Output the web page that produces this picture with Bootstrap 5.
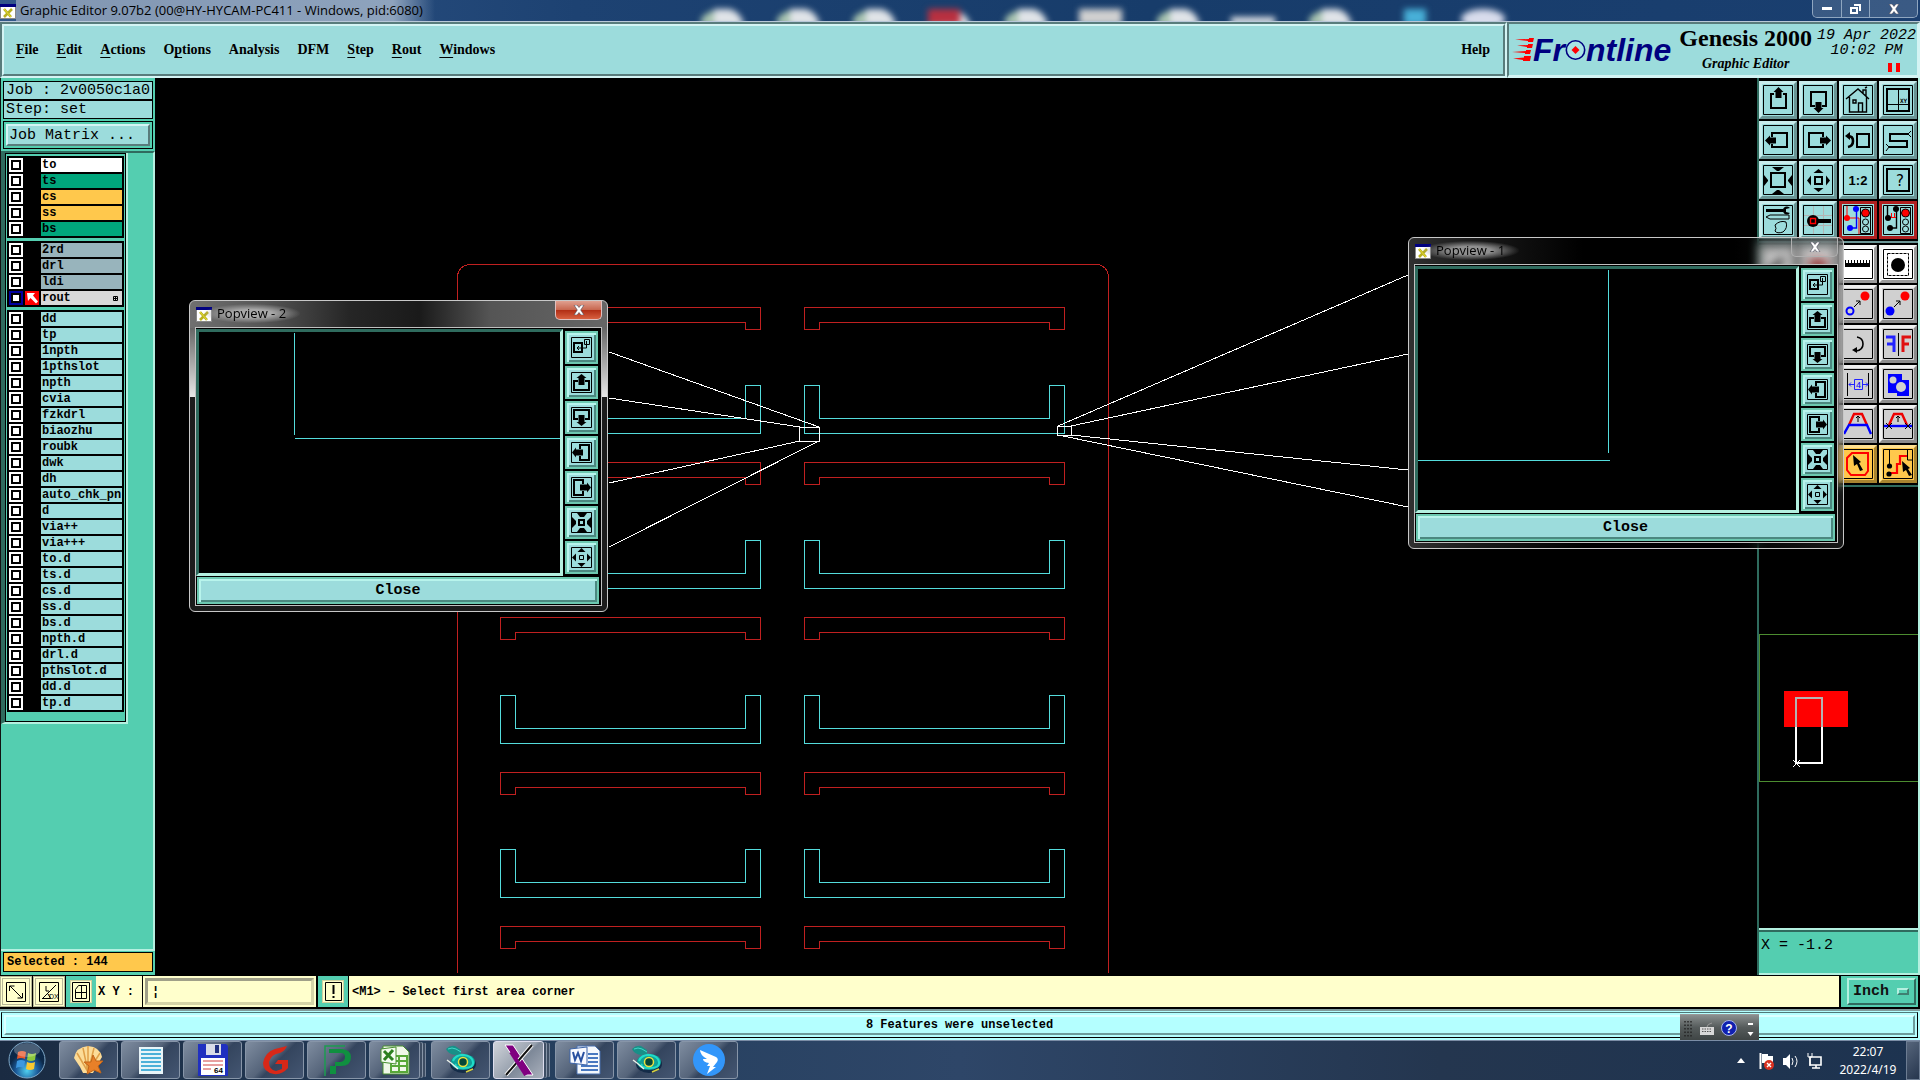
<!DOCTYPE html>
<html lang="en">
<head>
<meta charset="utf-8">
<meta name="viewport" content="width=device-width, initial-scale=1">
<title>Graphic Editor 9.07b2</title>
<link href="https://cdn.jsdelivr.net/npm/bootstrap@5.3.0/dist/css/bootstrap.min.css" rel="stylesheet">
<script src="https://cdn.jsdelivr.net/npm/bootstrap@5.3.0/dist/js/bootstrap.bundle.min.js"></script>
<style>
:root{--aqua:#9cdcdc;--aqua-hi:#d4f4f4;--aqua-lo:#587c7c;--green:#54ceb0;--green-hi:#b4f0e0;--green-lo:#2f6b5e;--cream:#ffffcc;--amber:#ffc84c}
body{background:#000;color:#000;overflow:hidden;line-height:1}
button{border-radius:0;color:#000}
svg{display:block;flex:none}
.ui-sans{font-family:"Open Sans","Noto Sans",sans-serif;font-size:13px}
.ui-serif{font-family:"Liberation Serif",serif;font-weight:bold;font-size:14px}
.mono-lg{font-family:"Liberation Mono",monospace;font-size:15px}
.mono-sm{font-family:"Liberation Mono",monospace;font-size:12px;font-weight:bold;white-space:nowrap}
/* main window title */
.app-title{height:22px;background:linear-gradient(90deg,#33588a,#1d4272 30%,#173c6a 60%,#1a3f70);border-bottom:1px solid #b9c8d8;overflow:hidden}
.app-title .glow-text{background:linear-gradient(90deg,#8095b1,#8ea3bd 90%,#8ea3bd00);padding-right:12px;line-height:21px}
.win-ctl{height:18px;border:1px solid #8fa6c0;border-top:0;border-radius:0 0 5px 5px;overflow:hidden;margin-right:2px}
.win-ctl button{border:0;border-right:1px solid #8fa6c0;background:#ffffff24;padding:0;display:flex;align-items:center;justify-content:center}
.ghosts{left:690px;top:0;overflow:hidden}
/* menu and brand */
.head-box{height:56px;background:var(--aqua);border:2px solid var(--aqua-lo);border-width:2px 0 0 2px}
.menu-panel{border:2px solid var(--aqua-hi);border-right-color:var(--aqua-lo);border-bottom-color:var(--aqua-lo);padding:0 13px 0 12px;gap:18px}
.menu-outer{border-right:2px solid var(--aqua-hi);border-bottom:2px solid var(--aqua-hi)}
.menu-link{color:#000;text-decoration:none}
.menu-link u{text-underline-offset:3px;text-decoration-thickness:1px}
.brand{width:413px;border-right:3px solid var(--aqua-hi);border-bottom:3px solid var(--aqua-hi)}
.logo-word{font:italic bold 32px "Liberation Sans",sans-serif;color:#000080;line-height:30px;margin-left:4px}
.brand-name{font-family:"Liberation Serif",serif;font-weight:bold;font-size:24px;line-height:28px}
.clock-txt{font-style:italic;line-height:15px}
.clock-col{padding:4px 0 0 4px}
.pause{margin:5px 17px 0 0}
.pause i{width:4px;height:9px;background:#f00}
/* left column */
.side{width:155px;background:var(--green);border-left:1px solid #111}
.info-box{height:19px;border:1px solid #000;background:var(--aqua);padding-left:2px;line-height:18px;white-space:nowrap}
.job-wrap{border:1px solid #000;height:28px;padding:2px;margin-top:2px}
.job-btn{border:2px solid var(--aqua-hi);border-right-color:var(--aqua-lo);border-bottom-color:var(--aqua-lo);background:var(--aqua);text-align:left;padding:0 0 0 1px}
.tray{border-top:2px solid var(--green-lo);border-right:2px solid var(--green-hi);border-bottom:2px solid var(--green-hi)}
.layer-well{width:127px;border-left:4px solid var(--green-lo);border-right:2px solid var(--green-hi);border-bottom:2px solid var(--green-hi)}
.layer-list{border:1px solid #000;padding:2px 1px 9px;display:flex;flex-direction:column;gap:3px}
.layer-set{background:#000;padding:2px;display:flex;flex-direction:column;gap:2px}
.layer-row{height:14px;display:flex;gap:2px}
.layer-row input{appearance:none;width:14px;height:14px;margin:0;background:#fff;border:2px solid #fff;box-shadow:inset 0 0 0 2px #000;flex:none}
.layer-row .act{width:14px;flex:none}
.layer-row .nm{flex:1;background:var(--aqua);padding-left:1px;line-height:14px;overflow:hidden}
.c-white .nm{background:#fff}.c-green .nm{background:#00a67c}.c-amber .nm{background:var(--amber)}.c-slate .nm{background:#98b4bc}
.c-active .nm{background:#d8d8d8}.c-active .act{background:#f00}.layer-row.c-active input{border-color:#0000a0}
.sel-box{background:var(--amber);border:1px solid #000;height:20px;line-height:18px;padding-left:3px}
/* right column */
.tools{width:163px;border-left:2px solid var(--green-lo);border-right:2px solid var(--green-hi)}
.tool-grid{display:grid;grid-template-columns:repeat(4,38px);gap:2px;padding:3px 0 2px}
.tool-grid.second{border-top:2px solid #6a9494;padding-top:2px}
.tb{width:38px;height:38px;padding:0;display:flex;align-items:center;justify-content:center;background:var(--aqua);border:3px solid;border-color:#c8ecec #6a9494 #6a9494 #c8ecec}
.tb.hot{border-color:#b02020;background:var(--aqua)}
.tb.wht{background:#fff;border-color:#f4f4f4 #9a9a9a #9a9a9a #f4f4f4}
.tb.gry{background:#d0d0d0;border-color:#f0f0f0 #8c8c8c #8c8c8c #f0f0f0}
.tb.amb{background:var(--amber);border-color:#ffe090 #a88430 #a88430 #ffe090}
.overview{border-top:2px solid var(--green-lo)}
.coord{height:47px;background:var(--green);border-top:2px solid var(--green-hi);border-bottom:2px solid var(--green-hi);box-shadow:inset 0 2px 0 var(--green-lo);padding:8px 2px}
/* command line */
.cmd{height:34px;background:#000;padding:1px 0 2px}
.cmd-fill{background:var(--cream)}
.cmd-msg{margin:0 2px 0 1px;padding-left:3px}
.xy-lbl{width:46px;padding-left:2px}
.cmd-btn{width:32px;padding:0;background:var(--cream);border:3px double #b8b898;display:flex;align-items:center;justify-content:center}
.cmd-btn.grn{width:30px;border:4px solid var(--green);box-shadow:inset 0 0 0 1px #d0d0a0}
.xy-in{width:169px;border:3px solid;border-color:#a0a088 #d4d4a8 #d4d4a8 #a0a088;outline:2px solid var(--cream);margin:2px 4px 2px 3px;background:var(--cream);border-radius:0;padding:0 4px}
.unit{background:var(--green);width:77px;padding:2px 2px 2px 6px;margin-right:2px}
.unit select{appearance:none;width:100%;border:2px solid;border-color:var(--green-hi) var(--green-lo) var(--green-lo) var(--green-hi);background:var(--green);font-weight:bold;padding:0 4px;border-radius:0;color:#111}
.unit i{right:9px;top:12px;width:12px;height:7px;border:2px solid;border-color:#b4f0e0 #3f8072 #3f8072 #b4f0e0;pointer-events:none}
.status{height:31px;background:#b4ffff;border-top:2px solid #809c9c;padding:1px 2px 2px 1px}
.status-in{border:1px solid #000;border-top-color:#507878}
.status-in div{border:2px solid #dcffff;border-right-color:#6c9c9c;border-bottom-color:#6c9c9c;margin:2px}
/* popview windows */
.pop{border:1px solid #c8c8c8;border-radius:6px;backdrop-filter:blur(5px);padding:0 5px 5px;height:312px}
.pop-1{left:1408px;top:237px;width:436px;background:linear-gradient(90deg,#5a5a5a88,#30303088 15%,#00000055 40%,#00000040 75%,#60606040)}
.pop-2{left:189px;top:300px;width:419px;background:linear-gradient(90deg,#707070,#555 18%,#262626 38%,#1a1a1a 55%,#555 72%,#666) 0 0/100% 27px no-repeat,#1c1c1c}
.pop-2::before,.pop-2::after{content:"";position:absolute;top:27px;width:5px;height:69px;background:linear-gradient(#666,#e8e8e8)}
.pop-2::before{left:0}.pop-2::after{right:0}
.pop-title{height:26px;padding-left:1px}
.pop-title svg.wi{margin-top:6px}
.pop-title .glow-text{background:radial-gradient(ellipse at center,#a8a8a8 30%,#a8a8a800 72%);padding:3px 14px;margin:3px 0 0 -9px}
.pop-1 .glow-text{background:radial-gradient(ellipse at center,#909090 30%,#90909000 72%)}
.pop-x{width:47px;height:19px;border:1px solid #e0c0c0;border-top:0;border-radius:0 0 5px 5px;background:linear-gradient(#e0a090,#c86850 48%,#b02c14 50%,#d86040);padding:0;display:flex;align-items:center;justify-content:center}
.pop-1 .pop-x{background:#ffffff18;border-color:#b0b0b0}
.pop-body{border:1px solid #c0c0c0;background:#000;padding:1px 1px 1px 0}
.pop-view{border:3px solid;border-color:var(--green-lo) var(--green-hi) var(--green-hi) var(--green-lo);background:#000}
.pop-tools{display:flex;flex-direction:column;gap:2px;padding:2px 2px 2px 2px}
.pb{width:33px;height:33px;padding:0;background:var(--aqua);border:2px solid #6cc8b0;display:flex;align-items:center;justify-content:center;box-shadow:inset 2px 2px 0 #b8f4ec,inset -2px -2px 0 #4c8880}
.pop-close{height:27px;margin:1px 1px 0;border:2px solid #6cc8b0;background:var(--aqua);box-shadow:inset 2px 2px 0 #b8f4ec,inset -2px -2px 0 #4c8880;padding:0;font-weight:bold}
/* taskbar */
.task{height:40px;background:linear-gradient(90deg,#1a2b42,#26405f 30%,#2e4668 50%,#24364f 75%,#1d3350);border-top:1px solid #7b8da6;padding-left:3px}
.tk{width:59px;height:38px;margin-right:3px;padding:0;display:flex;align-items:center;justify-content:center;border:1px solid #8795a8;border-radius:3px;background:linear-gradient(135deg,#7f8da0,#56657b 45%,#34455e 55%,#445672)}
.tk.stack{width:51px;margin-right:11px;box-shadow:3px 0 0 -1px #3d4d63,4px 0 0 -1px #8795a8,7px 0 0 -2px #3d4d63,8px 0 0 -2px #77869b}
.tk.on{background:linear-gradient(135deg,#d0d4da,#9aa3b0 50%,#7d8898 55%,#a9b0bc);border-color:#dde}
.orb{width:48px;padding:0;border:0;background:none;display:flex;justify-content:center;margin-right:8px}
.clock2{font-family:"Noto Sans",sans-serif;font-size:12px;line-height:18px;color:#fff;width:74px;text-align:center;margin:0 1px 0 5px}
.show-desk{width:14px;border:1px solid #6c7c92;background:linear-gradient(135deg,#56657b,#26364e)}
.ime{left:1680px;top:1014px;width:79px;height:26px;background:linear-gradient(#8a8f8f,#555b5b 50%,#3f4545);border-top:1px solid #999}
</style>
</head>
<body class="d-flex flex-column vh-100 position-relative">

<svg width="0" height="0" class="position-absolute" aria-hidden="true">
<defs>
<symbol id="winico" viewBox="0 0 16 15"><path fill="#fff" stroke="#888" d="M.5.5h15v14H.5z"/><path fill="#000080" d="M0 0h16v3H0z"/><path stroke="#b8b020" stroke-width="2.6" d="M4 5l7 8M12 5l-8 8"/><path stroke="#e8e030" d="M4 5l7 8"/></symbol>
<symbol id="cross" viewBox="0 0 12 10"><path d="M1 0h3l2 2.500 2-2.500h3L7.700 5 11 10H8L6 7.500 4 10H1l3.300-5z" fill="#fff" stroke="#445" stroke-width=".6"/></symbol>
<symbol id="fr" viewBox="0 0 30 30"><path d="M.5.5h29v29H.5z" fill="none" stroke="#000"/></symbol>
<symbol id="up" viewBox="0 0 30 30"><path d="M11 9H8v14h15V9h-3" fill="none" stroke="#000" stroke-width="2"/><path d="M15.500 2l5 5h-2v6h-6V7h-2z"/></symbol>
<symbol id="down" viewBox="0 0 30 30"><path d="M12 21H8V7h15v14h-4" fill="none" stroke="#000" stroke-width="2"/><path d="M15.500 28l5-5h-2v-6h-6v6h-2z"/></symbol>
<symbol id="left" viewBox="0 0 30 30"><path d="M9 12V8h15v14H9v-3" fill="none" stroke="#000" stroke-width="2"/><path d="M2 15.500l5-5v2h6v6H7v2z"/></symbol>
<symbol id="right" viewBox="0 0 30 30"><path d="M20 12V8H6v14h14v-3" fill="none" stroke="#000" stroke-width="2"/><path d="M28 15.500l-5-5v2h-6v6h6v2z"/></symbol>
<symbol id="zin" viewBox="0 0 30 30"><path d="M8 8h14v14H8z" fill="none" stroke="#000" stroke-width="2"/><path d="M9 2h12l-5 4h-2zM9 29h12l-5-4h-2zM1 10v11l4-5v-1zM29 10v11l-4-5v-1z"/></symbol>
<symbol id="zout" viewBox="0 0 30 30"><path d="M12 12h7v7h-7z" fill="none" stroke="#000" stroke-width="2"/><path d="M15.500 4l5 4h-10zM15.500 27l5-4h-10zM4 15.500l4-5v10zM27 15.500l-4-5v10z"/></symbol>
<symbol id="pf" viewBox="0 0 21 21"><path d="M.5.5h20v20H.5z" fill="none" stroke="#000"/></symbol>
<symbol id="p1" viewBox="0 0 21 21"><path d="M3 6h8v9H3z" fill="none" stroke="#000" stroke-width="2"/><path d="M13.500 2.500h5v5h-5zM15.500 4v7H6M8 9l-2 2 2 2" fill="none" stroke="#000"/></symbol>
<symbol id="p2" viewBox="0 0 21 21"><path d="M7 9H3v9h15V9h-4" fill="none" stroke="#000" stroke-width="2"/><path d="M10.500 2l5 4h-2v7h-6V6h-2z"/></symbol>
<symbol id="p3" viewBox="0 0 21 21"><path d="M7 12H3V3h15v9h-4" fill="none" stroke="#000" stroke-width="2"/><path d="M10.500 19l5-4h-2V8h-6v7h-2z"/></symbol>
<symbol id="p4" viewBox="0 0 21 21"><path d="M9 7V3h9v15H9v-4" fill="none" stroke="#000" stroke-width="2"/><path d="M1 10.500l4-5v2h7v6H5v2z"/></symbol>
<symbol id="p5" viewBox="0 0 21 21"><path d="M12 7V3H3v15h9v-4" fill="none" stroke="#000" stroke-width="2"/><path d="M20 10.500l-4-5v2H9v6h7v2z"/></symbol>
<symbol id="p6" viewBox="0 0 21 21"><path d="M8 8h5v5H8z" fill="none" stroke="#000" stroke-width="2"/><path d="M6 1h10l-3 4H9zM6 20h10l-3-4H9zM1 5v11l4-4V9zM20 5v11l-4-4V9z"/></symbol>
<symbol id="p7" viewBox="0 0 21 21"><path d="M8.500 8.500h4v4h-4z" fill="none" stroke="#000"/><path d="M10.500 1l4 4h-8zM10.500 20l4-4h-8zM1 10.500l4-4v8zM20 10.500l-4-4v8z"/></symbol>
<symbol id="lights" viewBox="0 0 30 30"><path d="M17.500 2.500h10v26h-10z" fill="#9cdcdc" stroke="#000"/><circle cx="22.500" cy="8" r="4" fill="#f00" stroke="#000"/><circle cx="22.500" cy="17" r="3" fill="none" stroke="#000"/><circle cx="22.500" cy="24" r="3" fill="none" stroke="#000"/></symbol>
<symbol id="cad" viewBox="0 0 32 32"><ellipse cx="18" cy="20" rx="13" ry="9" fill="#142c48"/><ellipse cx="18" cy="18" rx="12" ry="8" fill="#10a098"/><path d="M8 17q3-7 11-6t9 7-9 6-8-4" fill="none" stroke="#20dcc8" stroke-width="2"/><path d="M1 5q4-4 9-3l6 4v4l-6 1Q3 10 1 5z" fill="#189088"/><path d="M3 5q4-2 8 0l5 3" fill="none" stroke="#40d8c8"/><circle cx="18" cy="18" r="4.500" fill="#064838" stroke="#e8e040" stroke-width="1.500"/><path d="M2 16l4 3 7 6" stroke="#e8f0e8" stroke-width="1.500" fill="none"/><path d="M21 28l7-3" stroke="#d8d040" stroke-width="1.500"/></symbol>
</defs></svg>

<header class="app-title d-flex align-items-start flex-shrink-0 position-relative ui-sans">
  <svg width="16" height="15" class="mt-1"><use href="#winico"/></svg>
  <span class="glow-text ps-1 text-nowrap">Graphic Editor 9.07b2 (00@HY-HYCAM-PC411 - Windows, pid:6080)</span>
  <svg class="ghosts position-absolute" width="830" height="21" aria-hidden="true"><defs><g id="ghost"><path fill="#a8c4b0" d="M-21 24V17q5-8 17-9v16z"/><path fill="#e0e4e8" d="M-8 24V7H8q12 4 14 17z"/></g></defs><g filter="blur(3px)"><use href="#ghost" x="32" y="2"/><use href="#ghost" x="108" y="2"/><use href="#ghost" x="184" y="2"/><use href="#ghost" x="259" y="4"/><path d="M238 9h32v16h-32z" fill="#b83040"/><use href="#ghost" x="336" y="2"/><path d="M389 9h43v16h-43z" fill="#d0d0d0"/><use href="#ghost" x="488" y="2"/><path d="M541 17h44v8h-44z" fill="#e0e4e8"/><use href="#ghost" x="640" y="2"/><path d="M714 9h22v16h-22z" fill="#48b0d8"/><ellipse cx="793" cy="19" rx="22" ry="10" fill="#d8dcec"/></g></svg>
  <div class="win-ctl d-flex ms-auto position-relative">
    <button type="button" aria-label="Minimize" style="width:29px"><svg width="10" height="4"><path fill="#fff" d="M0 0h10v3H0z"/></svg></button>
    <button type="button" aria-label="Restore" style="width:28px"><svg width="11" height="10"><path fill="none" stroke="#fff" stroke-width="2" d="M1 4h6v5H1zM4 1h6v6"/></svg></button>
    <button type="button" aria-label="Close" class="border-0" style="width:47px"><svg width="12" height="10"><use href="#cross"/></svg></button>
  </div>
</header>

<div class="d-flex flex-shrink-0">
  <div class="head-box menu-outer d-flex flex-grow-1 p-0">
    <nav class="menu-panel flex-grow-1 d-flex align-items-center ui-serif">
      <a class="menu-link" href="#"><u>F</u>ile</a><a class="menu-link" href="#"><u>E</u>dit</a><a class="menu-link" href="#"><u>A</u>ctions</a><a class="menu-link" href="#">O<u>p</u>tions</a><a class="menu-link" href="#">Analysis</a><a class="menu-link" href="#">DFM</a><a class="menu-link" href="#"><u>S</u>tep</a><a class="menu-link" href="#"><u>R</u>out</a><a class="menu-link" href="#"><u>W</u>indows</a>
      <a class="menu-link ms-auto" href="#">Help</a>
    </nav>
  </div>
  <div class="head-box brand d-flex">
    <div class="d-flex align-items-center logo-word">
      <svg width="20" height="24" overflow="visible"><path fill="#f00" d="M2 1.500l14-.5V0h5l-1 4h-5V3zM4 7.500l11-.5V6h5l-1 4h-5V9zM-1 14l14-1v-1h5l-1 4h-5v-1zM0 20.500l11-1V18h7l-1 5h-7v-1z"/></svg>
      <span>Fr</span><svg width="21" height="21" viewBox="0 0 21 21" aria-label="o"><circle cx="10.500" cy="11" r="9.200" fill="#a8e4e4" stroke="#000080" stroke-width="1.600"/><path fill="#f00" d="M10.500 7l4 4-4 4-4-4z"/></svg><span>ntline</span>
    </div>
    <div class="d-flex flex-column align-items-center ms-1 ps-1"><div class="brand-name text-nowrap">Genesis 2000</div><div class="ui-serif fst-italic" style="line-height:24px">Graphic Editor</div></div>
    <div class="clock-col d-flex flex-column align-items-center mono-lg flex-grow-1"><div class="clock-txt text-nowrap">19 Apr 2022</div><div class="clock-txt">10:02 PM</div><div class="pause d-flex gap-1 align-self-end"><i></i><i></i></div></div>
  </div>
</div>

<main class="d-flex flex-grow-1" style="min-height:0">
  <aside class="side d-flex flex-column flex-shrink-0">
    <div class="mono-lg" style="padding:3px 2px 2px">
      <div class="info-box">Job : 2v0050c1a0</div>
      <div class="info-box">Step: set</div>
      <div class="job-wrap d-flex"><button class="job-btn flex-grow-1" type="button">Job Matrix ...</button></div>
    </div>
    <div class="tray flex-grow-1 mono-sm">
      <div class="layer-well"><div class="layer-list">
        <div class="layer-set">
          <label class="layer-row c-white"><input type="checkbox"><span class="act"></span><span class="nm">to</span></label>
          <label class="layer-row c-green"><input type="checkbox"><span class="act"></span><span class="nm">ts</span></label>
          <label class="layer-row c-amber"><input type="checkbox"><span class="act"></span><span class="nm">cs</span></label>
          <label class="layer-row c-amber"><input type="checkbox"><span class="act"></span><span class="nm">ss</span></label>
          <label class="layer-row c-green"><input type="checkbox"><span class="act"></span><span class="nm">bs</span></label>
        </div>
        <div class="layer-set">
          <label class="layer-row c-slate"><input type="checkbox"><span class="act"></span><span class="nm">2rd</span></label>
          <label class="layer-row c-slate"><input type="checkbox"><span class="act"></span><span class="nm">drl</span></label>
          <label class="layer-row c-slate"><input type="checkbox"><span class="act"></span><span class="nm">ldi</span></label>
          <label class="layer-row c-active"><input type="checkbox" checked><span class="act"><svg width="14" height="14"><path fill="#fff" d="M2 2h8L8 4.500l5 6-2 2-5.500-5.500L3 10z"/></svg></span><span class="nm d-flex justify-content-between align-items-center pe-1">rout<svg width="5" height="5"><path d="M.5.5h4v4h-4zM2.500 0v5M0 2.500h5" fill="none" stroke="#000"/></svg></span></label>
        </div>
        <div class="layer-set">
          <label class="layer-row"><input type="checkbox"><span class="act"></span><span class="nm">dd</span></label>
          <label class="layer-row"><input type="checkbox"><span class="act"></span><span class="nm">tp</span></label>
          <label class="layer-row"><input type="checkbox"><span class="act"></span><span class="nm">1npth</span></label>
          <label class="layer-row"><input type="checkbox"><span class="act"></span><span class="nm">1pthslot</span></label>
          <label class="layer-row"><input type="checkbox"><span class="act"></span><span class="nm">npth</span></label>
          <label class="layer-row"><input type="checkbox"><span class="act"></span><span class="nm">cvia</span></label>
          <label class="layer-row"><input type="checkbox"><span class="act"></span><span class="nm">fzkdrl</span></label>
          <label class="layer-row"><input type="checkbox"><span class="act"></span><span class="nm">biaozhu</span></label>
          <label class="layer-row"><input type="checkbox"><span class="act"></span><span class="nm">roubk</span></label>
          <label class="layer-row"><input type="checkbox"><span class="act"></span><span class="nm">dwk</span></label>
          <label class="layer-row"><input type="checkbox"><span class="act"></span><span class="nm">dh</span></label>
          <label class="layer-row"><input type="checkbox"><span class="act"></span><span class="nm">auto_chk_pnl</span></label>
          <label class="layer-row"><input type="checkbox"><span class="act"></span><span class="nm">d</span></label>
          <label class="layer-row"><input type="checkbox"><span class="act"></span><span class="nm">via++</span></label>
          <label class="layer-row"><input type="checkbox"><span class="act"></span><span class="nm">via+++</span></label>
          <label class="layer-row"><input type="checkbox"><span class="act"></span><span class="nm">to.d</span></label>
          <label class="layer-row"><input type="checkbox"><span class="act"></span><span class="nm">ts.d</span></label>
          <label class="layer-row"><input type="checkbox"><span class="act"></span><span class="nm">cs.d</span></label>
          <label class="layer-row"><input type="checkbox"><span class="act"></span><span class="nm">ss.d</span></label>
          <label class="layer-row"><input type="checkbox"><span class="act"></span><span class="nm">bs.d</span></label>
          <label class="layer-row"><input type="checkbox"><span class="act"></span><span class="nm">npth.d</span></label>
          <label class="layer-row"><input type="checkbox"><span class="act"></span><span class="nm">drl.d</span></label>
          <label class="layer-row"><input type="checkbox"><span class="act"></span><span class="nm">pthslot.d</span></label>
          <label class="layer-row"><input type="checkbox"><span class="act"></span><span class="nm">dd.d</span></label>
          <label class="layer-row"><input type="checkbox"><span class="act"></span><span class="nm">tp.d</span></label>
        </div>
      </div></div>
    </div>
    <div style="padding:1px 2px 3px"><div class="sel-box mono-sm">Selected : 144</div></div>
  </aside>

  <section class="flex-grow-1 overflow-hidden" aria-label="Board canvas" style="min-width:0">
    <svg width="100%" height="100%" shape-rendering="crispEdges" fill="none">
      <defs>
        <path id="rail" d="M.5.5h260v22h-15v-7h-230v7H.5z"/>
        <path id="tub" d="M.5.5h15v33h230V.5h15v48H.5z"/>
      </defs>
      <g transform="translate(-155 -78)">
        <path stroke="#c02020" d="M457.500 973V275q2-9 11-10.500h630q8 2 10 10.500v698"/>
        <g stroke="#c02020">
          <use href="#rail" x="500" y="307"/><use href="#rail" x="804" y="307"/>
          <use href="#rail" x="500" y="462"/><use href="#rail" x="804" y="462"/>
          <use href="#rail" x="500" y="617"/><use href="#rail" x="804" y="617"/>
          <use href="#rail" x="500" y="772"/><use href="#rail" x="804" y="772"/>
          <use href="#rail" x="500" y="926"/><use href="#rail" x="804" y="926"/>
        </g>
        <g stroke="#54dcdc">
          <use href="#tub" x="500" y="385"/><use href="#tub" x="804" y="385"/>
          <use href="#tub" x="500" y="540"/><use href="#tub" x="804" y="540"/>
          <use href="#tub" x="500" y="695"/><use href="#tub" x="804" y="695"/>
          <use href="#tub" x="500" y="849"/><use href="#tub" x="804" y="849"/>
        </g>
        <path stroke="#fff" d="M799.500 427.500h20v14h-20zM1057.500 426.500h14v9h-14zM609 352l210 75M609 398l191 29M609 483l191-42M609 547l210-106M1058 426l350-151M1071 426l337-72M1071 435l337 35M1058 435l350 72"/>
      </g>
    </svg>
  </section>

  <aside class="tools d-flex flex-column flex-shrink-0">
    <div class="tool-grid">
      <button type="button" class="tb" aria-label="Pan up"><svg width="30" height="30"><use href="#fr"/><use href="#up"/></svg></button>
      <button type="button" class="tb" aria-label="Pan down"><svg width="30" height="30"><use href="#fr"/><use href="#down"/></svg></button>
      <button type="button" class="tb" aria-label="Home view"><svg width="30" height="30"><use href="#fr"/><path d="M3 14L15 4l11 10M6.500 12v15h17V12M20 8V5h3v6M10 15h3v3h-3zM15.500 27v-9h4v9M22 3l2-1" fill="none" stroke="#000" stroke-width="1.400"/></svg></button>
      <button type="button" class="tb" aria-label="XY coordinates"><svg width="30" height="30"><use href="#fr"/><path d="M4 4h22v22H4z" fill="none" stroke="#000" stroke-width="2"/><path d="M15.500 4v22M4 19.500h22" stroke="#000"/><text x="17" y="18" font-size="6" font-family="DejaVu Sans Mono" font-weight="bold">XY</text></svg></button>
      <button type="button" class="tb" aria-label="Pan left"><svg width="30" height="30"><use href="#fr"/><use href="#left"/></svg></button>
      <button type="button" class="tb" aria-label="Pan right"><svg width="30" height="30"><use href="#fr"/><use href="#right"/></svg></button>
      <button type="button" class="tb" aria-label="Previous view"><svg width="30" height="30"><use href="#fr"/><path d="M14 9h12v13H14z" fill="none" stroke="#000" stroke-width="2"/><path d="M5 11q5 0 5 5t-5 6" fill="none" stroke="#000" stroke-width="2.600"/><path d="M2 11l5-4v8z"/></svg></button>
      <button type="button" class="tb" aria-label="Serpentine"><svg width="30" height="30"><use href="#fr"/><path d="M25 9H7v7h17v6H6" fill="none" stroke="#000" stroke-width="2"/><path d="M28 6l-3 3 3 3M3 19l3 3-3 4" fill="none" stroke="#000"/></svg></button>
      <button type="button" class="tb" aria-label="Zoom in"><svg width="30" height="30"><use href="#fr"/><use href="#zin"/></svg></button>
      <button type="button" class="tb" aria-label="Zoom out"><svg width="30" height="30"><use href="#fr"/><use href="#zout"/></svg></button>
      <button type="button" class="tb" aria-label="Scale 1:2"><svg width="30" height="30"><use href="#fr"/><text x="15" y="20" text-anchor="middle" font-size="13" font-family="Liberation Sans" font-weight="bold">1:2</text></svg></button>
      <button type="button" class="tb" aria-label="Query"><svg width="30" height="30"><use href="#fr"/><path d="M4 4h22v22H4z" fill="none" stroke="#000" stroke-width="2"/><text x="17" y="21" text-anchor="middle" font-size="15" font-family="DejaVu Sans">?</text></svg></button>
      <button type="button" class="tb" aria-label="Setup"><svg width="30" height="30"><use href="#fr"/><path d="M3 5.500h17" stroke="#000" stroke-width="3"/><path d="M27 3a4 4 0 1 0 0 5l-4-1V4z"/><path d="M3 12l4-2h19v4H7zM12 20q5-5 11-3 2 6-3 10-6 2-8-1 2-2 0-6z" fill="none" stroke="#000"/></svg></button>
      <button type="button" class="tb" aria-label="Snap"><svg width="30" height="30"><path d="M10.500 0v30M20.500 0v30M0 10.500h30M0 20.500h30" stroke="#b4b4b4"/><use href="#fr"/><circle cx="10" cy="16" r="6"/><path d="M14 16h14" stroke="#000" stroke-width="4"/><path d="M7.500 13.500h5v5h-5z" fill="none" stroke="#f00" stroke-width="1.400"/></svg></button>
      <button type="button" class="tb hot" aria-label="Net check"><svg width="30" height="30"><use href="#fr"/><path d="M4 1v12h12v16" fill="none" stroke="#f00"/><path d="M13.500 4v19H7" fill="none" stroke="#00f" stroke-width="1.400"/><circle cx="4" cy="13" r="3" fill="#f00"/><circle cx="13" cy="4" r="3" fill="#00f"/><circle cx="7" cy="23" r="3" fill="#00f"/><use href="#lights"/></svg></button>
      <button type="button" class="tb hot" aria-label="Spacing check"><svg width="30" height="30"><use href="#fr"/><path d="M4.500 1v12M13.500 4v19H7" fill="none" stroke="#000" stroke-width="1.400"/><path d="M6 12.500h7M8.500 8v4M11.500 8v4" stroke="#f00"/><circle cx="5" cy="13" r="3"/><circle cx="13" cy="4" r="3"/><circle cx="7" cy="23" r="3"/><use href="#lights"/></svg></button>
    </div>
    <div class="tool-grid second">
      <button type="button" class="tb wht" aria-label="Select"><svg width="30" height="30"><use href="#fr"/><path d="M6 24L20 10" stroke="#000" stroke-width="5"/></svg></button>
      <button type="button" class="tb wht" aria-label="Delete"><svg width="30" height="30"><use href="#fr"/><path d="M6 10h18v10H6z" fill="#a02020"/></svg></button>
      <button type="button" class="tb wht" aria-label="Measure"><svg width="30" height="30"><use href="#fr"/><path d="M2 18V11h1v3h2v-3h1v3h2v-3h1v3h2v-3h1v3h2v-3h1v3h2v-3h1v3h2v-3h1v3h2v-3h1v3h2v-3h1v7z"/></svg></button>
      <button type="button" class="tb wht" aria-label="Feature"><svg width="30" height="30"><use href="#fr"/><path d="M4.500 4.500h21v22h-21z" fill="none" stroke="#000" stroke-dasharray="3 1"/><circle cx="15" cy="16" r="7"/></svg></button>
      <button type="button" class="tb gry" aria-label="Edit 1"></button><button type="button" class="tb gry" aria-label="Edit 2"></button>
      <button type="button" class="tb gry" aria-label="Copy"><svg width="30" height="30"><use href="#fr"/><circle cx="7" cy="22" r="3.500" fill="none" stroke="#00f" stroke-width="2"/><circle cx="22" cy="7" r="4.500" fill="#f00"/><path d="M11 18l6-6m-4 0h4v4" fill="none" stroke="#000"/></svg></button>
      <button type="button" class="tb gry" aria-label="Move"><svg width="30" height="30"><use href="#fr"/><circle cx="7" cy="22" r="4.500" fill="#00f"/><circle cx="22" cy="7" r="4.500" fill="#f00"/><path d="M11 18l6-6m-4 0h4v4" fill="none" stroke="#000"/></svg></button>
      <button type="button" class="tb gry" aria-label="Edit 3"></button><button type="button" class="tb gry" aria-label="Edit 4"></button>
      <button type="button" class="tb gry" aria-label="Rotate"><svg width="30" height="30"><use href="#fr"/><path d="M14 8q6 1 6 7t-7 7" fill="none" stroke="#000" stroke-width="1.600"/><path d="M9 21l5-3v6z"/></svg></button>
      <button type="button" class="tb gry" aria-label="Mirror"><svg width="30" height="30"><use href="#fr"/><path d="M3 8h8v15M4 15h7" fill="none" stroke="#22f" stroke-width="3"/><path d="M28 8h-8v15M26 15h-6" fill="none" stroke="#e01010" stroke-width="3"/><path d="M15.500 4v23" stroke="#000"/></svg></button>
      <button type="button" class="tb gry" aria-label="Edit 5"></button><button type="button" class="tb gry" aria-label="Edit 6"></button>
      <button type="button" class="tb gry" aria-label="Stretch"><svg width="30" height="30"><use href="#fr"/><path d="M4.500 4v23M25.500 4v23" stroke="#000"/><path d="M11.500 10.500h8v10h-8zM11 15.500H6m2-2l-2 2 2 2M20 15.500h5m-2-2l2 2-2 2" fill="none" stroke="#22f"/><text x="15.500" y="19" text-anchor="middle" font-size="9" font-family="Liberation Sans" fill="#00f">4</text></svg></button>
      <button type="button" class="tb gry" aria-label="Boolean"><svg width="30" height="30"><use href="#fr"/><path d="M5 5h14v6h7v16H14v-3H5z" fill="#00f"/><circle cx="10" cy="11" r="3.500" fill="#d0d0d0"/><circle cx="18" cy="18" r="5" fill="#d0d0d0"/></svg></button>
      <button type="button" class="tb gry" aria-label="Edit 7"></button><button type="button" class="tb gry" aria-label="Edit 8"></button>
      <button type="button" class="tb gry" aria-label="Reshape line"><svg width="30" height="30"><use href="#fr"/><path d="M6 16l5-11h8l5 11" fill="none" stroke="#e00" stroke-width="2.400"/><path d="M1 25l5-9h18l4 9" fill="none" stroke="#00f" stroke-width="2.400"/><path d="M15 13V7m-2 2l2-2 2 2" fill="none" stroke="#000"/></svg></button>
      <button type="button" class="tb gry" aria-label="Reshape break"><svg width="30" height="30"><use href="#fr"/><path d="M6 16l5-11h8l5 11" fill="none" stroke="#e00" stroke-width="2.400"/><path d="M1 17h28" fill="none" stroke="#00f" stroke-width="2.400"/><path d="M15 13V7m-2 2l2-2 2 2M3 14l6 6M9 14l-6 6M22 14l6 6M28 14l-6 6" fill="none" stroke="#000"/></svg></button>
      <button type="button" class="tb amb" aria-label="Select 1"></button><button type="button" class="tb amb" aria-label="Select 2"></button>
      <button type="button" class="tb amb" aria-label="Polygon select"><svg width="30" height="30"><use href="#fr"/><path d="M9 4h16v18l-3 4H8l-4-5V9z" fill="none" stroke="#f00" stroke-width="2"/><path d="M10 6l8 7-2 1 4 7-3 1-3-7-3 2z"/></svg></button>
      <button type="button" class="tb amb" aria-label="Net select"><svg width="30" height="30"><use href="#fr"/><path d="M7 24h7v-9h3V7h8" fill="none" stroke="#f00" stroke-width="2.200"/><path d="M6.500 1v16M24.500 1v10h5" stroke="#000" fill="none"/><circle cx="6.500" cy="17" r="2.600"/><circle cx="6" cy="25" r="2.600"/><path d="M19 12l8 7-2 1 4 6-3 1-3-6-3 2z"/></svg></button>
    </div>
    <div class="overview flex-grow-1">
      <svg width="159" height="100%" fill="none" shape-rendering="crispEdges">
        <g transform="translate(-1759 -487)"><path stroke="#4c8c30" d="M1920 634.500h-160.500v147H1920"/><path fill="#f00" d="M1784 691h64v36h-64z"/><path stroke="#fff" stroke-width="2" d="M1796 727v36h26v-36"/><path stroke="#b4b4b4" stroke-width="2" d="M1796 727v-29h26v29"/><path stroke="#fff" d="M1793 760l7 7M1800 760l-7 7"/></g>
      </svg>
    </div>
    <div class="coord mono-lg">X = -1.2</div>
  </aside>
</main>

<div class="cmd d-flex flex-shrink-0">
  <button type="button" class="cmd-btn" aria-label="Area corner"><svg width="20" height="20"><path d="M.5.5h19v19H.5zM3.500 9V4h5M4 4l12 12M16.500 11v5h-5" fill="none" stroke="#000"/></svg></button>
  <button type="button" class="cmd-btn" style="margin:0 1px" aria-label="Angle input"><svg width="20" height="20"><path d="M.5.5h19v19H.5zM3 17L17 3M3 16.500h8M7 4v5h3M9 12l3 5" fill="none" stroke="#000"/><text x="10" y="17" font-size="7" font-family="Liberation Sans">DX</text></svg></button>
  <button type="button" class="cmd-btn grn" aria-label="Grid"><svg width="18" height="20"><path d="M.5.5h17v19H.5zM3.500 7.500l3-4h8v13h-11zM9.500 3v14M3 10.500h12" fill="none" stroke="#000"/></svg></button>
  <label for="xy" class="cmd-fill xy-lbl d-flex align-items-center mono-sm">X Y :</label>
  <input id="xy" class="xy-in mono-sm" type="text" value="¦">
  <button type="button" class="cmd-btn grn" aria-label="Confirm"><svg width="17" height="19"><path d="M.5.5h16v18H.5z" fill="none" stroke="#000"/><path d="M7.500 3h2v9h-2zM7.500 14h2v2h-2z"/></svg></button>
  <div class="cmd-fill cmd-msg flex-grow-1 d-flex align-items-center mono-sm">&lt;M1&gt; – Select first area corner</div>
  <div class="unit position-relative d-flex"><select class="mono-lg" aria-label="Units"><option>Inch</option></select><i class="position-absolute"></i></div>
</div>

<div class="status d-flex flex-shrink-0"><div class="status-in flex-grow-1 d-flex"><div class="flex-grow-1 d-flex align-items-center justify-content-center mono-sm">8 Features were unselected</div></div></div>

<footer class="task d-flex flex-shrink-0">
  <button type="button" class="orb" aria-label="Start"><svg width="38" height="38"><defs><radialGradient id="og" cy=".8"><stop offset="0" stop-color="#4fd0f0"/><stop offset=".6" stop-color="#1c5c9c"/><stop offset="1" stop-color="#0c2848"/></radialGradient></defs><circle cx="19" cy="19" r="18" fill="url(#og)" stroke="#7ea8c8"/><path d="M10 11q4-2 8 0l-1 7q-4-2-8 0z" fill="#e8582c"/><path d="M20 12q4 2 8 0l-1 7q-4 2-8 0z" fill="#8cc83c"/><path d="M9 20q4-2 8 0l-1 7q-4-2-8 0z" fill="#3c98e0"/><path d="M19 21q4 2 8 0l-1 7q-4 2-8 0z" fill="#f8c830"/><ellipse cx="19" cy="9" rx="13" ry="7" fill="#fff" opacity=".25"/></svg></button>
  <button type="button" class="tk" aria-label="Shell"><svg width="34" height="32"><path d="M2 14Q4 3 16 2q12 1 14 11l-6 10-3 6H11L8 23z" fill="#fcdc98"/><path d="M16 28L5 9M16 28L11 4M16 28V2M16 28l6-24M16 28L28 9" stroke="#e0a048" stroke-width="1.500" fill="none"/><path d="M21 11l3 6 7 0-5 5 3 7-7-3-7 4 2-8-5-4h7z" fill="#e88028" stroke="#c06418"/></svg></button>
  <button type="button" class="tk" aria-label="Notepad"><svg width="28" height="30"><path d="M2 2h24v27H2z" fill="#e8f4f8"/><path d="M4 5h20M4 9h20M4 13h20M4 17h20M4 21h20M4 25h20" stroke="#4cb0d8" stroke-width="2"/></svg></button>
  <button type="button" class="tk" aria-label="Total Commander"><svg width="32" height="34"><path d="M1 1h28l2 2v30H1z" fill="#2030c0"/><path d="M9 1h15v11H9z" fill="#d8dce8"/><path d="M18 2h4v8h-4z" fill="#203080"/><path d="M4 15h24v17H4z" fill="#fff"/><path d="M6 18h20M6 22h20M6 26h8" stroke="#d04040"/><text x="17" y="30" font-size="8" font-family="Liberation Sans" font-weight="bold">64</text></svg></button>
  <button type="button" class="tk" aria-label="Gerber tool"><svg width="30" height="32"><path d="M27 2q-2 5-7 7-9 1-11 9 0 8 7 9l6-2v-5h-7l3-4h10v8q-6 7-14 6Q3 28 3 19 5 8 15 5z" fill="#d82818"/></svg></button>
  <button type="button" class="tk" aria-label="PCB tool"><svg width="32" height="34"><path d="M4 33V3h20" fill="none" stroke="#1c9c50" stroke-width="1.500"/><path d="M8 6h13q9 1 9 8 0 9-10 9h-5v8H9v-8h5v-4h6q4-1 4-5t-4-4H8z" fill="#109040"/></svg></button>
  <button type="button" class="tk stack" aria-label="Excel"><svg width="32" height="32"><path d="M4 2h20l6 6v22H4z" fill="#f0f8e8" stroke="#489030"/><path d="M12 12h16v16H12zM20 12v16M12 17h16M12 22h16" fill="none" stroke="#58a838" stroke-width="2"/><path d="M2 5l15-2v17L2 18z" fill="#f4fcf0" stroke="#489030"/><path d="M5 7l9 9M14 6L5 16" stroke="#2c8020" stroke-width="3"/></svg></button>
  <button type="button" class="tk" aria-label="CAM"><svg width="34" height="32"><use href="#cad"/></svg></button>
  <button type="button" class="tk on stack" aria-label="Graphic Editor"><svg width="34" height="32"><path d="M3 1h8l20 30h-8z" fill="#800080" stroke="#fff"/><path d="M30 1L4 31" stroke="#fff" stroke-width="4"/><path d="M30 1L4 31" stroke="#101010" stroke-width="2"/><path d="M9 8l15 23" stroke="#800080" stroke-width="4"/></svg></button>
  <button type="button" class="tk" aria-label="Word"><svg width="32" height="32"><path d="M8 2h18l5 5v23H8z" fill="#f4f8fc" stroke="#4870b0"/><path d="M19 10h10M19 14h10M19 18h10M12 22h17M12 26h17" stroke="#4878c0" stroke-width="2"/><path d="M1 5l17-2v18L1 19z" fill="#f8faff" stroke="#3c64a8"/><path d="M4 8l2 8 3-7 3 8 3-9" fill="none" stroke="#2850a0" stroke-width="2"/></svg></button>
  <button type="button" class="tk" aria-label="CAM 2"><svg width="34" height="32"><use href="#cad"/></svg></button>
  <button type="button" class="tk" aria-label="Messenger"><svg width="34" height="34"><circle cx="17" cy="17" r="16" fill="#3296fa"/><path d="M8 7l16 7q3 2 1 5l-4 5h3l-9 7 3-8h-3l2-3q-6-1-6-4l4 0q-7-4-7-9z" fill="#fff"/></svg></button>
  <div class="d-flex ms-auto align-items-center">
    <svg width="100" height="24"><path d="M11 14l4-5 4 5z" fill="#fff"/><path d="M34.500 4v16" stroke="#fff" stroke-width="2"/><path d="M36 5h6v2h5v7H36z" fill="#fff"/><circle cx="43" cy="16" r="5" fill="#d83020"/><path d="M41 14l4 4M45 14l-4 4" stroke="#fff" stroke-width="1.400"/><path d="M57 9h3l4-4v15l-4-4h-3z" fill="#fff"/><path d="M66 9q2 3 0 7M69 7q4 5 0 11" stroke="#fff" fill="none"/><path d="M84 8h11v8H84zM86 19h8M90 16v3" fill="none" stroke="#fff" stroke-width="1.600"/><path d="M82 4v4h4V4M84 8v9" fill="none" stroke="#fff"/></svg>
    <div class="clock2">22:07<br>2022/4/19</div>
  </div>
  <button type="button" class="show-desk" aria-label="Show desktop"></button>
</footer>

<div class="ime position-absolute d-flex align-items-center">
  <svg width="79" height="24"><path d="M5 5v16M8 5v16M11 5v16" stroke="#222" stroke-width="1.400" stroke-dasharray="1.500 2"/><path d="M20 11h14v8H20z" fill="#d8d8d8"/><path d="M22 13h10M22 15.500h10" stroke="#555" stroke-dasharray="1.500 1"/><path d="M27 11q0-3 5-4" stroke="#999" fill="none"/><circle cx="49" cy="12" r="7.500" fill="#1020b0" stroke="#a8b4e8"/><text x="49" y="16.500" text-anchor="middle" font-size="12" font-weight="bold" font-family="Liberation Sans" fill="#fff">?</text><path d="M68 7h5v2h-5zM67.500 16h6l-3 4z" fill="#fff"/></svg>
</div>

<section class="pop pop-2 position-absolute d-flex flex-column" aria-label="Popview - 2">
  <div class="pop-title d-flex align-items-start ui-sans flex-shrink-0"><svg class="wi" width="16" height="15"><use href="#winico"/></svg><span class="glow-text">Popview - 2</span><button type="button" class="pop-x ms-auto" aria-label="Close window"><svg width="12" height="10"><use href="#cross"/></svg></button></div>
  <div class="pop-body flex-grow-1 d-flex flex-column">
    <div class="d-flex">
      <div class="pop-view flex-grow-1"><svg width="100%" height="100%"><path d="M95.500 1v102M96 106.500h265" stroke="#54dcdc" shape-rendering="crispEdges"/></svg></div>
      <div class="pop-tools">
        <button type="button" class="pb" aria-label="Link view"><svg width="21" height="21"><use href="#pf"/><use href="#p1"/></svg></button>
        <button type="button" class="pb" aria-label="Up"><svg width="21" height="21"><use href="#pf"/><use href="#p2"/></svg></button>
        <button type="button" class="pb" aria-label="Down"><svg width="21" height="21"><use href="#pf"/><use href="#p3"/></svg></button>
        <button type="button" class="pb" aria-label="Left"><svg width="21" height="21"><use href="#pf"/><use href="#p4"/></svg></button>
        <button type="button" class="pb" aria-label="Right"><svg width="21" height="21"><use href="#pf"/><use href="#p5"/></svg></button>
        <button type="button" class="pb" aria-label="Zoom in"><svg width="21" height="21"><use href="#pf"/><use href="#p6"/></svg></button>
        <button type="button" class="pb" aria-label="Zoom out"><svg width="21" height="21"><use href="#pf"/><use href="#p7"/></svg></button>
      </div>
    </div>
    <button type="button" class="pop-close mono-lg">Close</button>
  </div>
</section>

<section class="pop pop-1 position-absolute d-flex flex-column" aria-label="Popview - 1">
  <div class="pop-title d-flex align-items-start ui-sans flex-shrink-0"><svg class="wi" width="16" height="15"><use href="#winico"/></svg><span class="glow-text">Popview - 1</span><button type="button" class="pop-x ms-auto" aria-label="Close window"><svg width="12" height="10"><use href="#cross"/></svg></button></div>
  <div class="pop-body flex-grow-1 d-flex flex-column">
    <div class="d-flex">
      <div class="pop-view flex-grow-1"><svg width="100%" height="100%"><path d="M190.500 1v183M0 191.500h192" stroke="#54dcdc" shape-rendering="crispEdges"/></svg></div>
      <div class="pop-tools">
        <button type="button" class="pb" aria-label="Link view"><svg width="21" height="21"><use href="#pf"/><use href="#p1"/></svg></button>
        <button type="button" class="pb" aria-label="Up"><svg width="21" height="21"><use href="#pf"/><use href="#p2"/></svg></button>
        <button type="button" class="pb" aria-label="Down"><svg width="21" height="21"><use href="#pf"/><use href="#p3"/></svg></button>
        <button type="button" class="pb" aria-label="Left"><svg width="21" height="21"><use href="#pf"/><use href="#p4"/></svg></button>
        <button type="button" class="pb" aria-label="Right"><svg width="21" height="21"><use href="#pf"/><use href="#p5"/></svg></button>
        <button type="button" class="pb" aria-label="Zoom in"><svg width="21" height="21"><use href="#pf"/><use href="#p6"/></svg></button>
        <button type="button" class="pb" aria-label="Zoom out"><svg width="21" height="21"><use href="#pf"/><use href="#p7"/></svg></button>
      </div>
    </div>
    <button type="button" class="pop-close mono-lg">Close</button>
  </div>
</section>
</body>
</html>
